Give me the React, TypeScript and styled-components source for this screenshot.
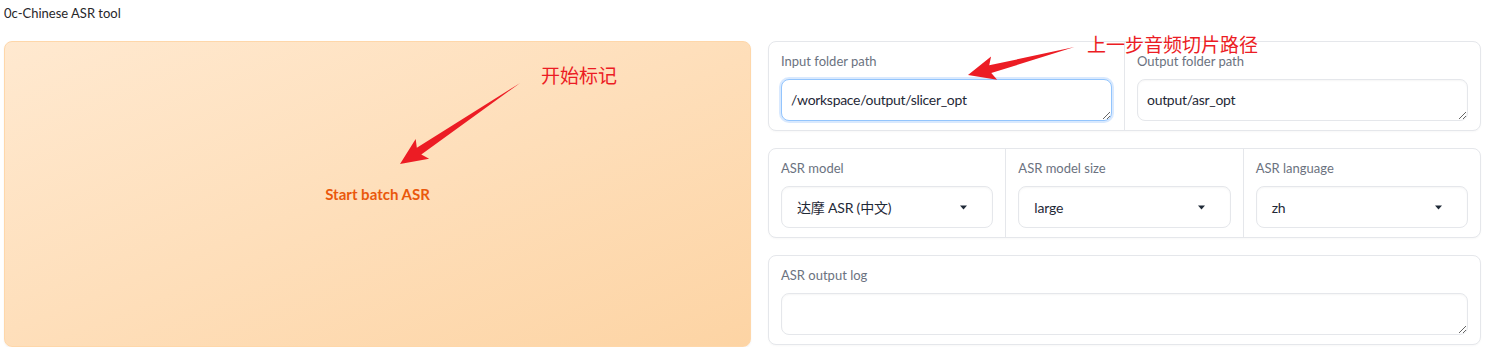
import React from 'react';
import styled, { createGlobalStyle } from 'styled-components';

const GlobalStyle = createGlobalStyle`
  html, body {
    margin: 0;
    padding: 0;
    background: #ffffff;
  }
  body {
    font-family: Lato, 'Noto Sans CJK SC', sans-serif;
    color: #1f2937;
  }
`;

const Page = styled.div`
  position: relative;
  padding: 4px 12px 0 4px;
`;

const Title = styled.div`
  font-size: 13px;
  line-height: 18px;
  color: #27272a;
  height: 37px;
`;

const Main = styled.div`
  display: grid;
  grid-template-columns: 747px 1fr;
  gap: 17px;
  height: 306px;
`;

const BatchButton = styled.button`
  border: 1px solid #fed7aa;
  border-radius: 8px;
  background: linear-gradient(to bottom right, #ffe9d0, #fdd4a4);
  box-shadow: 0 1px 2px rgba(0, 0, 0, 0.06);
  color: #ea580c;
  font-family: Lato, sans-serif;
  font-weight: 700;
  font-size: 15px;
  cursor: pointer;
  padding: 0;
`;

const Column = styled.div`
  display: flex;
  flex-direction: column;
  gap: 17px;
`;

const Block = styled.div`
  display: flex;
  border: 1px solid #e5e7eb;
  border-radius: 8px;
  background: #ffffff;
  box-shadow: 0 1px 2px rgba(0, 0, 0, 0.03);
`;

const Field = styled.div`
  flex: 1;
  padding: 9px 12px;
  & + & {
    border-left: 1px solid #e5e7eb;
  }
`;

const Label = styled.div`
  font-size: 13px;
  line-height: 20px;
  color: #6b7280;
  margin-bottom: 8px;
`;

const TextArea = styled.textarea<{ $focused?: boolean }>`
  display: block;
  box-sizing: border-box;
  width: 100%;
  height: 42px;
  resize: vertical;
  padding: 10px 9px;
  border-radius: 8px;
  border: 1px solid ${(p) => (p.$focused ? '#93c5fd' : '#e5e7eb')};
  box-shadow: ${(p) =>
    p.$focused ? '0 0 0 2px rgba(191, 219, 254, 0.6)' : 'inset 0 1px 2px rgba(0, 0, 0, 0.04)'};
  font-family: Lato, sans-serif;
  font-size: 14px;
  letter-spacing: -0.3px;
  line-height: 20px;
  color: #1f2937;
  outline: none;
  background: #ffffff;
`;

const Select = styled.div`
  display: flex;
  align-items: center;
  justify-content: space-between;
  box-sizing: border-box;
  height: 42px;
  padding: 0 25px 0 15px;
  border: 1px solid #e5e7eb;
  border-radius: 8px;
  box-shadow: inset 0 1px 2px rgba(0, 0, 0, 0.04);
  font-size: 14px;
  letter-spacing: -0.2px;
  color: #1f2937;
`;

const Caret = () => (
  <svg width="7" height="5" viewBox="0 0 7 5">
    <path d="M0 0.5 L7 0.5 L3.5 4.5 Z" fill="#1f2937" />
  </svg>
);

const Note = styled.div<{ $x: number; $y: number }>`
  position: absolute;
  left: ${(p) => p.$x}px;
  top: ${(p) => p.$y}px;
  font-family: 'Noto Sans CJK SC', sans-serif;
  font-size: 19px;
  line-height: 22px;
  color: #ec1c24;
  white-space: nowrap;
`;

const Overlay = styled.svg`
  position: absolute;
  left: 0;
  top: 0;
  pointer-events: none;
`;

const Arrow = ({ x, y, angle, len }: { x: number; y: number; angle: number; len: number }) => (
  <polygon
    transform={`translate(${x} ${y}) rotate(${angle})`}
    points={`0,0 27,-12 23,-4 ${len},0 23,4 27,12`}
    fill="#ec1c24"
  />
);

const Dropdown = ({ label, value }: { label: string; value: string }) => (
  <Field>
    <Label>{label}</Label>
    <Select>
      <span>{value}</span>
      <Caret />
    </Select>
  </Field>
);

export default function App() {
  return (
    <>
      <GlobalStyle />
      <Page>
        <Title>0c-Chinese ASR tool</Title>
        <Main>
          <BatchButton>Start batch ASR</BatchButton>
          <Column>
            <Block>
              <Field>
                <Label>Input folder path</Label>
                <TextArea $focused defaultValue="/workspace/output/slicer_opt" />
              </Field>
              <Field>
                <Label>Output folder path</Label>
                <TextArea defaultValue="output/asr_opt" />
              </Field>
            </Block>
            <Block>
              <Dropdown label="ASR model" value="达摩 ASR (中文)" />
              <Dropdown label="ASR model size" value="large" />
              <Dropdown label="ASR language" value="zh" />
            </Block>
            <Block>
              <Field>
                <Label>ASR output log</Label>
                <TextArea />
              </Field>
            </Block>
          </Column>
        </Main>
        <Note $x={541} $y={64}>开始标记</Note>
        <Note $x={1087} $y={33}>上一步音频切片路径</Note>
        <Overlay width="1493" height="363">
          <Arrow x={400} y={164} angle={-34} len={145} />
          <Arrow x={968} y={75} angle={-14.7} len={110} />
        </Overlay>
      </Page>
    </>
  );
}
